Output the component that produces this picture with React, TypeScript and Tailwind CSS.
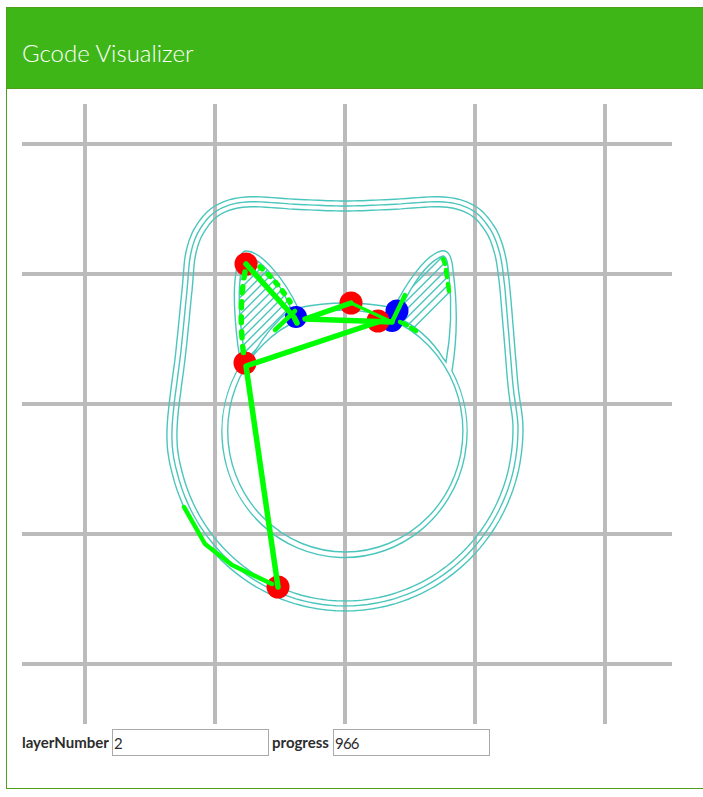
type Pt = [number, number];

// lower half of the outline is close to an ellipse
const lowerPts: Pt[] = Array.from({ length: 13 }, (_, i) => {
  const a = Math.PI - (i * Math.PI) / 12;
  return [345 + 178 * Math.cos(a), 430 + 181 * Math.sin(a)] as Pt;
});

const bodyPts: Pt[] = [
  [345, 201], [300, 199.5], [246, 197], [215, 206], [196, 226], [186, 252], [182, 290], [176, 350],
  ...lowerPts,
  [518, 385], [513, 325], [509, 280], [504, 250], [494, 226], [475, 206], [444, 197], [390, 199.5],
];

// sample a closed catmull-rom curve, then push every sample along its normal
function offsetPath(pts: Pt[], dist: number) {
  const samples: Pt[] = [];
  const n = pts.length;
  for (let i = 0; i < n; i++) {
    const p0 = pts[(i - 1 + n) % n];
    const p1 = pts[i];
    const p2 = pts[(i + 1) % n];
    const p3 = pts[(i + 2) % n];
    for (let s = 0; s < 10; s++) {
      const t = s / 10;
      const f = (a: number, b: number, c: number, d: number) =>
        0.5 * (2 * b + (c - a) * t + (2 * a - 5 * b + 4 * c - d) * t * t + (3 * b - a - 3 * c + d) * t * t * t);
      samples.push([f(p0[0], p1[0], p2[0], p3[0]), f(p0[1], p1[1], p2[1], p3[1])]);
    }
  }
  const out = samples.map((p, i) => {
    const a = samples[(i - 3 + samples.length) % samples.length];
    const b = samples[(i + 3) % samples.length];
    const dx = b[0] - a[0];
    const dy = b[1] - a[1];
    const len = Math.hypot(dx, dy) || 1;
    return `${(p[0] + (dy / len) * dist).toFixed(1)} ${(p[1] - (dx / len) * dist).toFixed(1)}`;
  });
  return `M${out.join("L")}Z`;
}

const gridX = [85, 215, 345, 475, 605];
const gridY = [144, 274, 404, 534, 664];
// the hatch stops partway down the right ear
const hatch = Array.from({ length: 30 }, (_, i) => 495 + i * 8.5);

const ringOuter =
  "M452 371A122.6 126 0 1 1 241 364C236 340 233 300 235 280C237 262 240 250 247 251C262 252 285 280 298 308Q345 298 394 308C405 285 425 255 441 251C449 249 452 258 453 270C457 300 458 335 452 371Z";
const leftEar = "M247 257C262 258 280 283 291 309Q265 330 248 364C240 340 238 300 240 280C241 265 243 257 247 257Z";
const rightEar = "M443 256C448 257 448 268 449 275C452 305 451 335 446 362L443 358C432 340 415 325 398 318C405 295 425 262 443 256Z";

function Visualizer() {
  return (
    <svg width="650" height="620" viewBox="22 104 650 620" className="block">
      <defs>
        <clipPath id="ears">
          <path d={leftEar} />
          <path d={rightEar} />
        </clipPath>
      </defs>

      <g stroke="#bbbbbb" strokeWidth="4">
        {gridX.map((x) => (
          <line key={x} x1={x} y1="104" x2={x} y2="724" />
        ))}
        {gridY.map((y) => (
          <line key={y} x1="22" y1={y} x2="672" y2={y} />
        ))}
      </g>

      <g fill="none" stroke="#4bc6bd" strokeWidth="1.4">
        {[0, 5, 10].map((d) => (
          <path key={d} d={offsetPath(bodyPts, d)} />
        ))}
        <path d={ringOuter} />
        <ellipse cx="345.3" cy="431" rx="117.6" ry="121" />
        <path d={leftEar} />
        <path d={rightEar} />
        <g clipPath="url(#ears)">
          {hatch.map((c) => (
            <line key={c} x1="200" y1={c - 200} x2="480" y2={c - 480} />
          ))}
        </g>
      </g>

      <g fill="#0000ff">
        <circle cx="296" cy="317" r="11" />
        <circle cx="392" cy="321" r="11" />
        <circle cx="397" cy="311" r="11.5" />
      </g>

      <g fill="#ff0000">
        <circle cx="246" cy="264" r="11.5" />
        <circle cx="351" cy="303" r="11.5" />
        <circle cx="378" cy="321" r="11.5" />
        <circle cx="245" cy="363" r="11.5" />
        <circle cx="278" cy="587" r="11.5" />
      </g>

      <g fill="none" stroke="#00ff00" strokeLinecap="round" strokeLinejoin="round">
        <path d="M184 507L205 544L232 565L272 584" strokeWidth="4.5" />
        <path d="M278 587L246 366L378 322" strokeWidth="5.5" />
        <path d="M351 303L305 319L392 322" strokeWidth="5.5" />
        <path d="M351 303L392 322" strokeWidth="3.5" />
        <path d="M246 264L294 317L297 323" strokeWidth="5.5" />
        <path d="M295 311L275 330" strokeWidth="4.5" />
        <path d="M392 322L405 295" strokeWidth="4.5" />
        <path d="M245 272Q238 310 244 358" strokeWidth="5.5" strokeDasharray="6 9" />
        <path d="M260 267Q276 280 290 302" strokeWidth="5.5" strokeDasharray="3 8" />
        <path d="M443 259L445 264M446 270L447 277M448 284L449 291" strokeWidth="4.5" />
        <path d="M400 322L407 325M411 328L416 331" strokeWidth="4.5" />
      </g>
    </svg>
  );
}

export default function App() {
  return (
    <div className="w-[703px] h-[797px] overflow-hidden pt-[7px] pl-[6px] bg-white font-['Lato',sans-serif] text-[#2d2d2d]">
      <div className="w-[720px] h-[782px] border border-[#4e9f1c]">
        <div className="h-[82px] -mt-px -mx-px bg-[#3fb618] border border-[#4e9f1c] pl-[15px] pt-[27px]">
          <h1 className="text-[24px] leading-[36px] font-light text-white">Gcode Visualizer</h1>
        </div>
        <div className="pt-[15px] pl-[15px]">
          <Visualizer />
          <div className="flex items-center mt-[5px] text-[15px]">
            <label className="font-bold mr-[3px] w-[87px]">layerNumber</label>
            <input
              defaultValue="2"
              className="w-[157px] h-[27px] border border-[#a9a9a9] px-[1px] text-[15px] tracking-[-0.8px] outline-none"
            />
            <label className="font-bold ml-[3px] mr-[3px] w-[58px]">progress</label>
            <input
              defaultValue="966"
              className="w-[157px] h-[27px] border border-[#a9a9a9] px-[1px] text-[15px] tracking-[-0.8px] outline-none"
            />
          </div>
        </div>
      </div>
    </div>
  );
}
